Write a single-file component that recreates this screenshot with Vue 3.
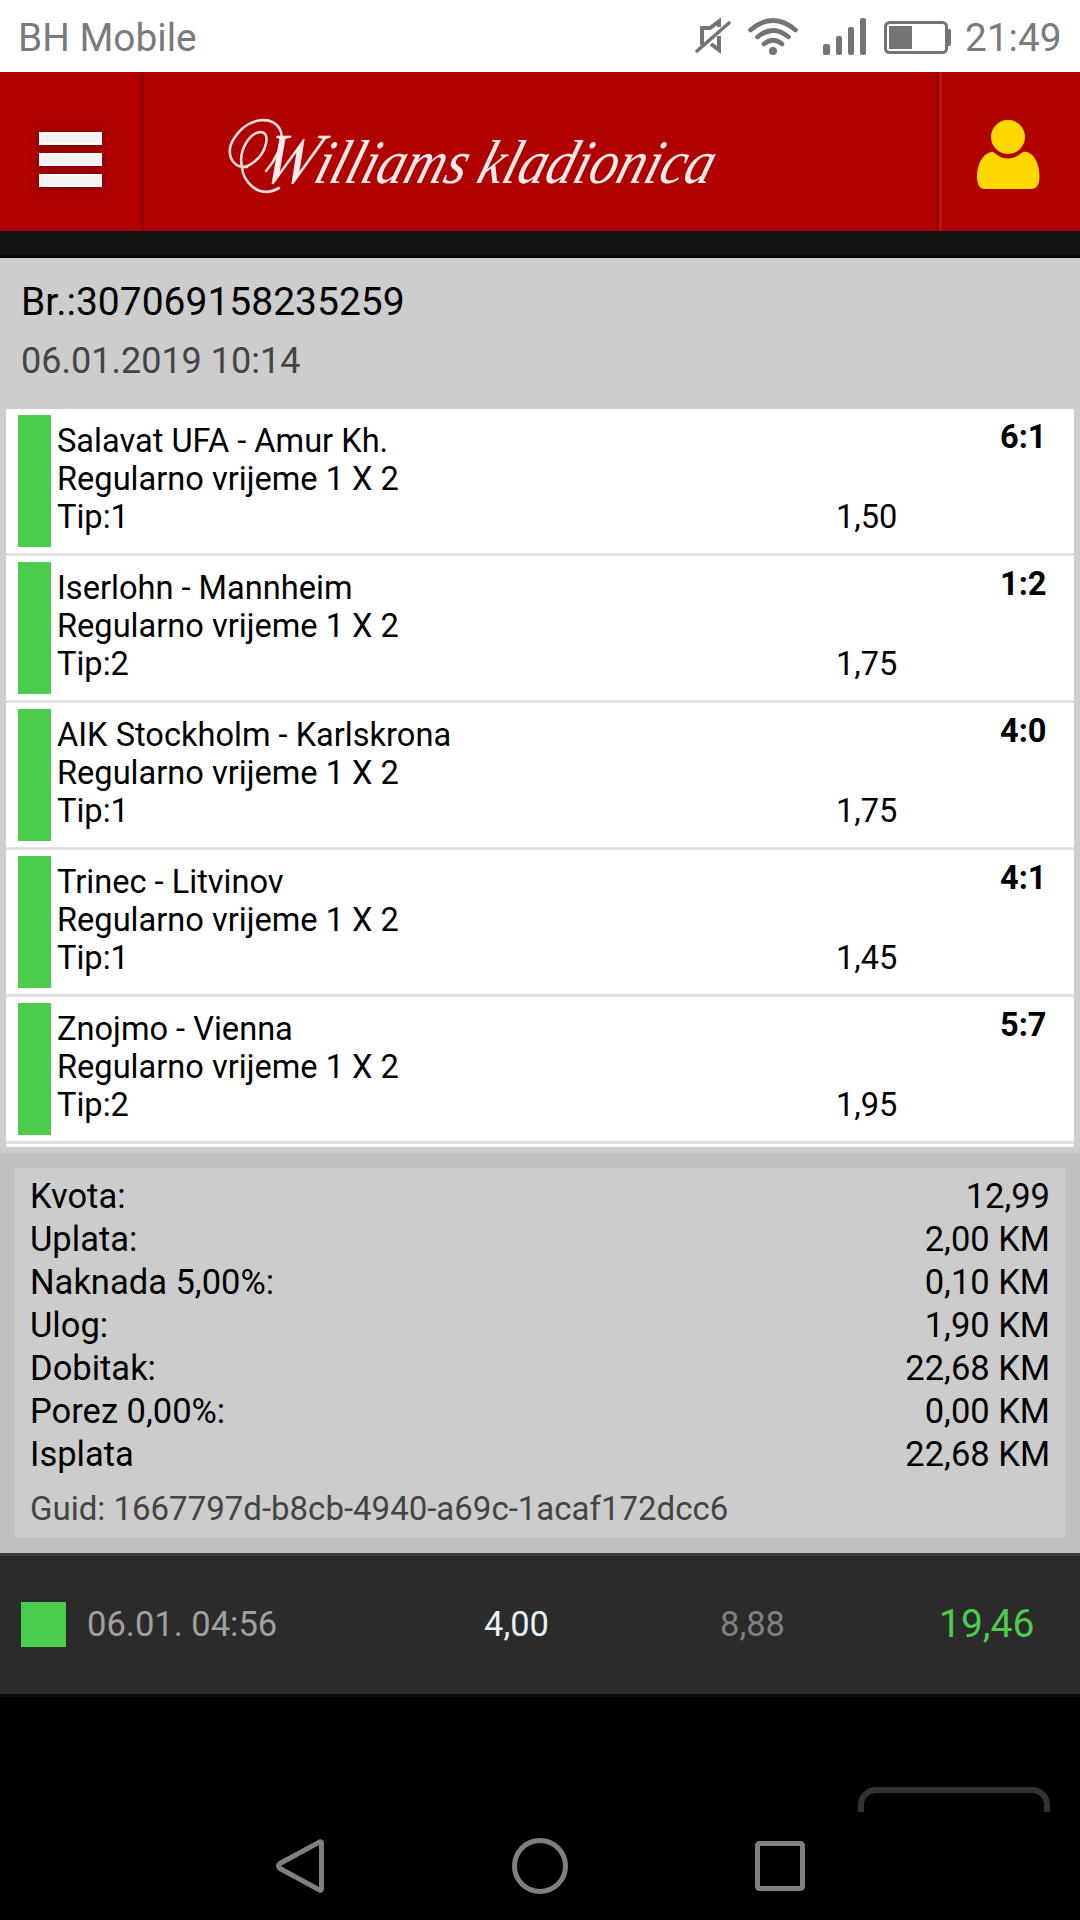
<script setup>
const bets = [
  { match: 'Salavat UFA - Amur Kh.', tip: '1', odds: '1,50', score: '6:1' },
  { match: 'Iserlohn - Mannheim', tip: '2', odds: '1,75', score: '1:2' },
  { match: 'AIK Stockholm - Karlskrona', tip: '1', odds: '1,75', score: '4:0' },
  { match: 'Trinec - Litvinov', tip: '1', odds: '1,45', score: '4:1' },
  { match: 'Znojmo - Vienna', tip: '2', odds: '1,95', score: '5:7' },
]
const totals = [
  ['Kvota:', '12,99'],
  ['Uplata:', '2,00 KM'],
  ['Naknada 5,00%:', '0,10 KM'],
  ['Ulog:', '1,90 KM'],
  ['Dobitak:', '22,68 KM'],
  ['Porez 0,00%:', '0,00 KM'],
  ['Isplata', '22,68 KM'],
]
</script>

<template>
  <div class="screen">
    <div class="status">
      <span class="carrier">BH Mobile</span>
      <svg class="status-icons" width="270" height="72" viewBox="690 0 270 72">
        <g fill="none" stroke="#747474">
          <path d="M702 45V28H710L719 21.500V27M719 36V50L711 44" stroke-width="4" />
          <path d="M697 51L729 23" stroke-width="3.600" stroke-linecap="round" />
          <g stroke-width="4.600" stroke-linecap="round">
            <path d="M750.500 30Q773 11 795.500 30" />
            <path d="M757.500 37Q773 24 788.500 37" />
            <path d="M764 44Q773 36.500 782 44" />
          </g>
          <rect x="885.500" y="22.500" width="61" height="30" rx="4" stroke-width="3" />
        </g>
        <g fill="#747474">
          <circle cx="773" cy="51" r="4" />
          <rect x="823" y="44" width="7" height="11" rx="2" />
          <rect x="836" y="36" width="6" height="19" rx="2" />
          <rect x="848" y="27" width="6" height="28" rx="2" />
          <rect x="860" y="18" width="6" height="37" rx="2" />
          <rect x="889" y="26" width="23" height="23" />
          <path d="M947 29h2q2 0 2 2v13q0 2 -2 2h-2z" />
        </g>
      </svg>
      <span class="clock">21:49</span>
    </div>

    <header class="topbar">
      <div class="menu"><i></i><i></i><i></i></div>
      <div class="brand">
        <svg width="792" height="159" viewBox="144 72 792 159">
          <path class="swash" d="M247 167C230 168 225 151 235 137C248 117 275 114 281 132C284 145 274 162 266 171M242 167C238 150 250 133 260 132C272 132 266 153 254 162C249 166 245 167 242 167C242 180 258 200 279 188" />
          <text class="logo" transform="translate(258 183) skewX(-17)" textLength="451" lengthAdjust="spacingAndGlyphs"><tspan font-size="72">W</tspan><tspan font-size="62">illiams kladionica</tspan></text>
        </svg>
      </div>
      <div class="user">
        <svg width="64" height="72" viewBox="0 0 64 72">
          <circle cx="32" cy="18" r="17" fill="#ffd800" />
          <path d="M15 33C17 32 18 34 20 35C27 41 37 41 44 35C46 34 47 32 51 33C59 35 63.500 46 63.500 58Q63.500 69 56 70H8Q1 69 1 58C1 46 6 35 15 33Z" fill="#ffd800" />
        </svg>
      </div>
    </header>
    <div class="band"></div>

    <section class="ticket">
      <div class="number">Br.:307069158235259</div>
      <div class="date">06.01.2019 10:14</div>
      <ul class="bets">
        <li v-for="b in bets" :key="b.match">
          <i class="won"></i>
          <div class="info">
            <div>{{ b.match }}</div>
            <div>Regularno vrijeme 1 X 2</div>
            <div>Tip:{{ b.tip }}</div>
          </div>
          <span class="odds">{{ b.odds }}</span>
          <b class="score">{{ b.score }}</b>
        </li>
      </ul>
    </section>

    <section class="summary">
      <div class="panel">
        <div v-for="t in totals" :key="t[0]" class="total">
          <span>{{ t[0] }}</span><span>{{ t[1] }}</span>
        </div>
        <div class="guid">Guid: 1667797d-b8cb-4940-a69c-1acaf172dcc6</div>
      </div>
    </section>

    <section class="other">
      <i class="mark"></i>
      <span class="when">06.01. 04:56</span>
      <span class="stake">4,00</span>
      <span class="quota">8,88</span>
      <span class="win">19,46</span>
    </section>

    <div class="rest"><div class="button"></div></div>

    <nav class="nav">
      <svg width="540" height="108" viewBox="270 1812 540 108" fill="none" stroke="#808080" stroke-width="5">
        <path d="M321.500 1843.500V1888.500Q321.500 1891.500 318.800 1889.600L280 1868.500Q277 1866 280 1863.500L318.800 1842.400Q321.500 1840.500 321.500 1843.500Z" stroke-linejoin="round" />
        <circle cx="540" cy="1866" r="25.500" />
        <rect x="757.500" y="1843.500" width="45" height="45" rx="2" />
      </svg>
    </nav>
  </div>
</template>

<style>
body { margin: 0; background: #000; }
</style>

<style scoped>
.screen { width: 1080px; height: 1920px; overflow: hidden; background: #000; color: #000; font-family: Roboto, sans-serif; display: flex; flex-direction: column; }
.screen > * { flex: none; box-sizing: border-box; }
.status { height: 72px; background: #fff; color: #7b7b7b; display: flex; align-items: center; font-size: 38.800px; line-height: 46px; padding: 4px 14px 0 18px; }
.carrier { width: 672px; flex: none; }
.status-icons { display: block; margin-top: -4px; flex: none; }
.clock { margin-left: 5px; }
.topbar { height: 159px; background: #b00000; display: flex; }
.menu { width: 144px; box-sizing: border-box; border-right: 3px solid #900000; padding: 60px 0 0 39px; display: flex; flex-direction: column; gap: 8px; }
.menu i { width: 63px; height: 13px; box-sizing: border-box; background: #f2f2f2; border: 2px solid #fff; box-shadow: 0 1px 9px rgba(60, 0, 0, 0.55); }
.brand { width: 792px; }
.brand svg { display: block; }
.logo { font-family: "Liberation Serif", serif; font-style: italic; fill: #fbeaea; word-spacing: -2px; }
.swash { fill: none; stroke: #f6dcdc; stroke-width: 2.6px; stroke-linecap: round; }
.user { flex: 1; border-left: 3px solid #900000; box-shadow: inset 3px 0 #c01515; padding: 47px 0 0 37px; }
.user svg { display: block; }
.band { height: 27px; background: #111; border-bottom: 3px solid #060606; }
.ticket { height: 895px; background: #cdcdcd; padding: 21px 6px 0; }
.number { font-size: 39px; line-height: 46px; padding-left: 15px; }
.date { font-size: 36px; line-height: 42px; padding: 15px 0 0 15px; color: #444; }
.bets { list-style: none; margin: 27px 0 0; padding: 0 0 3px; background: #fff; }
.bets li { height: 147px; box-sizing: border-box; border-bottom: 3px solid #e2e2e2; padding: 6px 0 0 12px; display: flex; font-size: 32.600px; line-height: 38px; }
.won { width: 33px; height: 132px; background: #4ccc4c; margin-right: 6px; flex: none; }
.info { width: 779px; padding-top: 7px; flex: none; }
.odds { width: 164px; padding-top: 83px; flex: none; }
.score { padding-top: 3px; }
.summary { height: 400px; background: #c0c0c0; padding: 15px; }
.panel { height: 370px; box-sizing: border-box; background: #ccc; padding: 7px 15px 0; font-size: 34.500px; line-height: 43px; }
.total { display: flex; justify-content: space-between; }
.guid { font-size: 33px; color: #444; padding-top: 11px; }
.other { height: 144px; background: #2b2b2b; border-top: 3px solid #3c3c3c; border-bottom: 3px solid #0c0c0c; display: flex; align-items: center; padding: 0 0 2px 21px; font-size: 34.500px; }
.mark { width: 45px; height: 45px; background: #4ccc4c; margin-right: 21px; }
.when { width: 397px; color: #a0a0a0; }
.stake { width: 236px; color: #e8f0f8; }
.quota { width: 219px; color: #808080; }
.win { font-size: 39px; color: #4ccc4c; }
.rest { height: 115px; overflow: hidden; padding: 90px 0 0 858px; }
.button { width: 192px; height: 60px; box-sizing: border-box; border: 6px solid #333; border-radius: 18px; }
.nav { height: 108px; display: flex; justify-content: center; background: #000; }
</style>
